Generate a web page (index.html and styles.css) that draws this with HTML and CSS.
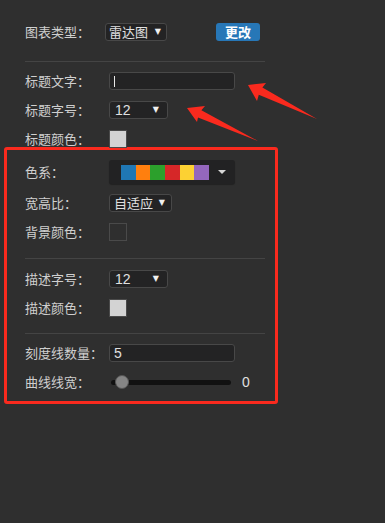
FILE: index.html
```html
<!DOCTYPE html>
<html lang="zh-CN">
<head>
    <meta charset="UTF-8">
    <meta name="viewport" content="width=device-width, initial-scale=1.0">
    <title>图表配置</title>
    <link rel="stylesheet" href="styles.css">
</head>
<body>
    <div class="panel">
        <div class="row row-first">
            <span class="label label-short">图表类型：</span>
            <div class="select select-type">雷达图<span class="caret">▼</span></div>
            <button class="btn">更改</button>
        </div>

        <div class="divider"></div>

        <div class="row">
            <span class="label">标题文字：</span>
            <div class="input"><span class="cursor"></span></div>
        </div>
        <div class="row">
            <span class="label">标题字号：</span>
            <div class="select select-size">12<span class="caret">▼</span></div>
        </div>
        <div class="row">
            <span class="label">标题颜色：</span>
            <div class="swatch light"></div>
        </div>

        <div class="group marked">
            <div class="row row-palette">
                <span class="label">色系：</span>
                <div class="palette">
                    <div class="colors">
                        <span style="background:#1f77b4"></span>
                        <span style="background:#ff7f0e"></span>
                        <span style="background:#2ca02c"></span>
                        <span style="background:#d62728"></span>
                        <span style="background:#fcd133"></span>
                        <span style="background:#9467bd"></span>
                    </div>
                    <span class="palette-caret"></span>
                </div>
            </div>
            <div class="row">
                <span class="label">宽高比：</span>
                <div class="select select-ratio">自适应<span class="caret">▼</span></div>
            </div>
            <div class="row">
                <span class="label">背景颜色：</span>
                <div class="swatch dark"></div>
            </div>

            <div class="divider divider-inner"></div>

            <div class="row">
                <span class="label">描述字号：</span>
                <div class="select select-size">12<span class="caret">▼</span></div>
            </div>
            <div class="row">
                <span class="label">描述颜色：</span>
                <div class="swatch light"></div>
            </div>

            <div class="divider divider-inner divider-last"></div>

            <div class="row">
                <span class="label">刻度线数量：</span>
                <div class="input"><span class="value">5</span></div>
            </div>
            <div class="row row-last">
                <span class="label">曲线线宽：</span>
                <div class="slider">
                    <div class="track"></div>
                    <div class="thumb"></div>
                </div>
                <span class="slider-value">0</span>
            </div>
        </div>
    </div>

    <!-- annotation arrows -->
    <svg class="arrows" width="385" height="523" viewBox="0 0 385 523">
        <polygon points="248,85 266,83 262.4,87.6 317,119 258.8,94.8 257,101" fill="#fa2a1e"/>
        <polygon points="187,108 205,106 201.4,110.3 258,141 198,117.5 197,122" fill="#fa2a1e"/>
    </svg>
</body>
</html>
```

FILE: styles.css
```css
body {
    margin: 0;
    background-color: #2f2f2f;
    font-family: "Noto Sans CJK SC", "Liberation Sans", sans-serif;
    font-size: 13px;
    color: #cfcfcf;
    min-height: 523px;
    position: relative;
}
.panel {
    padding-top: 23px;
    padding-left: 25px;
}
.row {
    display: flex;
    align-items: center;
    height: 18px;
    margin-bottom: 11px;
}
.label {
    width: 84px;
    flex-shrink: 0;
    line-height: 18px;
    white-space: nowrap;
}
.label-short {
    width: 80px;
}
.row-first {
    margin-bottom: 0;
}
.divider {
    width: 240px;
    height: 1px;
    background-color: #444;
    margin: 20px 0 10px;
}
.select {
    box-sizing: border-box;
    height: 18px;
    border: 1px solid #484848;
    border-radius: 3px;
    background-color: #232324;
    color: #e0e0e0;
    display: flex;
    align-items: center;
    padding-left: 5px;
    position: relative;
    line-height: 16px;
}
.select-type {
    width: 62px;
    padding-left: 3px;
}
.select-size {
    width: 59px;
    font-family: "Liberation Sans", sans-serif;
    font-size: 14px;
}
.select-ratio {
    width: 63px;
    padding-left: 4px;
}
.caret {
    position: absolute;
    right: 5px;
    top: 3px;
    font-size: 8px;
    line-height: 10px;
    color: #f0f0f0;
    font-family: "DejaVu Sans", sans-serif;
}
.select-size .caret {
    right: 8px;
}
.select-ratio .caret {
    right: 6px;
}
.btn {
    margin-left: 49px;
    width: 44px;
    height: 18px;
    padding: 0;
    border: none;
    border-radius: 3px;
    background-color: #2777b7;
    color: #fff;
    font-family: "Noto Sans CJK SC", sans-serif;
    font-size: 13px;
    font-weight: bold;
    line-height: 18px;
}
.input {
    box-sizing: border-box;
    width: 126px;
    height: 18px;
    border: 1px solid #484848;
    border-radius: 3px;
    background-color: #232324;
    display: flex;
    align-items: center;
    padding-left: 4px;
}
.cursor {
    width: 1px;
    height: 11px;
    background-color: #e8e8e8;
}
.value {
    font-family: "Liberation Sans", sans-serif;
    font-size: 14px;
    color: #e0e0e0;
}
.swatch {
    box-sizing: border-box;
    width: 18px;
    height: 18px;
    border: 1px solid #4a4a4a;
}
.swatch.light {
    background-color: #d3d3d3;
}
.swatch.dark {
    background-color: #2f2f2f;
}
.group.marked {
    margin-left: -21px;
    margin-top: -12px;
    width: 274px;
    box-sizing: border-box;
    border: 3px solid #fa2a1e;
    border-radius: 3px;
    padding: 10px 0 10px 18px;
}
.row-palette {
    height: 24px;
    margin-bottom: 10px;
}
.palette {
    box-sizing: border-box;
    width: 126px;
    height: 24px;
    border-radius: 3px;
    background-color: #222223;
    box-shadow: 0 1px 1px rgba(0,0,0,0.3);
    display: flex;
    align-items: center;
    padding-left: 12px;
}
.colors {
    display: flex;
    width: 88px;
    height: 15px;
}
.colors span {
    flex: 1;
}
.palette-caret {
    margin-left: 9px;
    width: 0;
    height: 0;
    border-left: 4px solid transparent;
    border-right: 4px solid transparent;
    border-top: 4px solid #d8d8d8;
}
.divider-inner {
    margin: 17px 0 11px;
}
.divider-last {
    margin: 16px 0 10px;
}
.row-last {
    margin-bottom: 0;
}
.slider {
    position: relative;
    width: 122px;
    height: 16px;
    margin-left: 2px;
    display: flex;
    align-items: center;
}
.track {
    width: 120px;
    height: 5px;
    border-radius: 3px;
    background-color: #111;
}
.thumb {
    position: absolute;
    left: 4px;
    top: 1px;
    width: 14px;
    height: 14px;
    border-radius: 50%;
    background-color: #858585;
    border: 1px solid #555;
    box-sizing: border-box;
}
.slider-value {
    margin-left: 9px;
    font-family: "Liberation Sans", sans-serif;
    font-size: 14px;
    color: #e0e0e0;
}
.arrows {
    position: absolute;
    left: 0;
    top: 0;
    pointer-events: none;
}
```
